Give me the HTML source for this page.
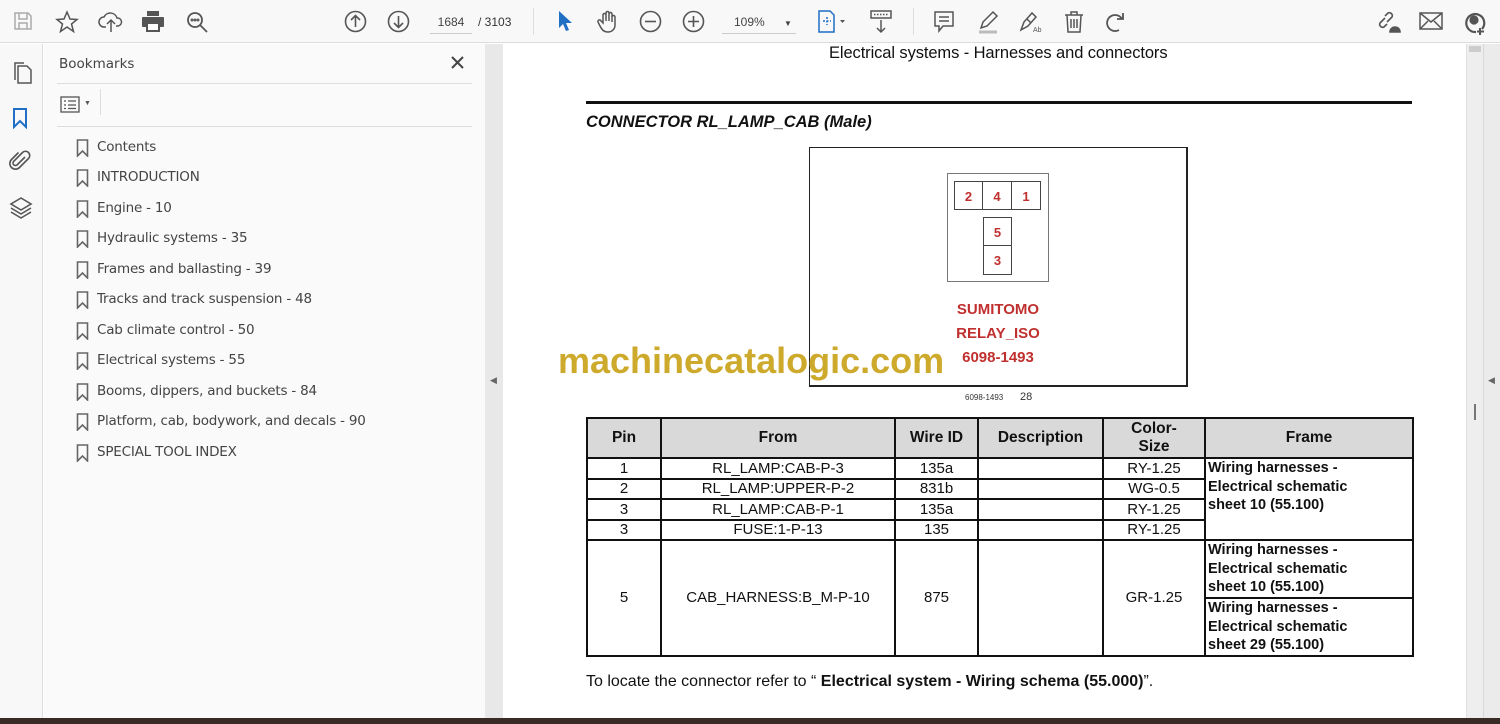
<!DOCTYPE html>
<html><head><style>
*{margin:0;padding:0;box-sizing:border-box}
body{width:1500px;height:724px;overflow:hidden;background:#fff;font-family:"Liberation Sans",sans-serif;position:relative}
.abs{position:absolute}
#tb{left:0;top:0;width:1500px;height:43px;background:#f8f8f8;border-bottom:1px solid #dcdcdc}
.ic{position:absolute;top:10px}
#side{left:0;top:44px;width:43px;height:674px;background:#f8f8f8;border-right:1px solid #ddd}
#panel{left:44px;top:44px;width:441px;height:674px;background:#fafafa}
#gl{left:485px;top:44px;width:18px;height:674px;background:#e8e8e8}
#page{left:503px;top:44px;width:963px;height:674px;background:#fff}
#sb{left:1466px;top:44px;width:17px;height:674px;background:#eeeeee;border-left:1px solid #e0e0e0}
#gr{left:1483px;top:44px;width:17px;height:674px;background:#ebebeb;border-left:1px solid #d8d8d8}
#bot{left:0;top:718px;width:1500px;height:6px;background:#3a2a26}
.bm{position:absolute;left:76px;color:#444;font-family:"DejaVu Sans",sans-serif;font-size:13.5px;letter-spacing:-0.2px}
.bm svg{position:absolute;left:0;top:1px}
.bm span{position:absolute;left:21px;top:1px;white-space:nowrap}
table{position:absolute;left:586px;top:417px;border-collapse:collapse;font-size:15px;color:#111;table-layout:fixed;width:826px}
td{border:2px solid #111;text-align:center;padding:0;line-height:17px}
th{border:2px solid #111;background:#d9d9d9;font-weight:bold;font-size:15.5px;line-height:18px}
.fr{text-align:left;font-weight:bold;padding-left:2px;line-height:18.5px;vertical-align:top;white-space:nowrap;font-size:14.5px}
.red{color:#c0302f;font-weight:bold;font-family:"Liberation Sans",sans-serif}
</style></head><body>
<div id="tb" class="abs">
<svg class="ic" style="left:12px" width="22" height="22" viewBox="0 0 22 22" fill="none" stroke="#aaa" stroke-width="1.5"><path d="M3 3h13l3 3v13H3z M7 3v6h8V3 M7 19v-6h8v6"/></svg>
<svg class="ic" style="left:55px" width="24" height="24" viewBox="0 0 24 24" fill="none" stroke="#555" stroke-width="1.5"><path d="M12 2l3 7 7 .5-5.5 4.5 2 7.5L12 17l-6.5 4.5 2-7.5L2 9.5 9 9z"/></svg>
<svg class="ic" style="left:98px" width="26" height="24" viewBox="0 0 26 24" fill="none" stroke="#555" stroke-width="1.5"><path d="M8 17H6a5 5 0 010-10 7 7 0 0113 1 4 4 0 011 8h-2 M13 22V10 M9 14l4-4 4 4"/></svg>
<svg class="ic" style="left:141px" width="24" height="22" viewBox="0 0 24 22" fill="#555"><rect x="6" y="1" width="12" height="5"/><rect x="1" y="7" width="22" height="10" rx="1"/><rect x="6" y="13" width="12" height="8" fill="#fff" stroke="#555" stroke-width="2"/></svg>
<svg class="ic" style="left:185px" width="24" height="24" viewBox="0 0 24 24" fill="none" stroke="#555" stroke-width="1.8"><circle cx="10" cy="10" r="7"/><path d="M15 15l7 7"/><circle cx="7" cy="10" r=".6"/><circle cx="10" cy="10" r=".6"/><circle cx="13" cy="10" r=".6"/></svg>
<svg class="ic" style="left:344px" width="23" height="23" viewBox="0 0 23 23" fill="none" stroke="#555" stroke-width="1.6"><circle cx="11.5" cy="11.5" r="10"/><path d="M11.5 17V6 M7 10l4.5-4.5L16 10"/></svg>
<svg class="ic" style="left:387px" width="23" height="23" viewBox="0 0 23 23" fill="none" stroke="#555" stroke-width="1.6"><circle cx="11.5" cy="11.5" r="10"/><path d="M11.5 6v11 M7 13l4.5 4.5L16 13"/></svg>
<div class="abs" style="left:430px;top:12px;width:42px;height:22px;border-bottom:1px solid #ccc;font-size:12px;color:#444;text-align:center;line-height:20px">1684</div>
<div class="abs" style="left:478px;top:12px;font-size:12px;color:#333;line-height:20px">/ 3103</div>
<div class="abs" style="left:533px;top:8px;width:1px;height:27px;background:#ddd"></div>
<svg class="ic" style="left:557px" width="16" height="22" viewBox="0 0 16 22"><path d="M2 1v17l4-4 3 7 3-1-3-7h6z" fill="#1f6fc5"/></svg>
<svg class="ic" style="left:596px" width="24" height="24" viewBox="0 0 24 24" fill="none" stroke="#555" stroke-width="1.5"><path d="M7 13V5a1.5 1.5 0 013 0v6V3a1.5 1.5 0 013 0v8V4a1.5 1.5 0 013 0v8V7a1.5 1.5 0 013 0v8c0 4-3 7-7 7s-6-2-8-6l-2-4a1.5 1.5 0 013-1z"/></svg>
<svg class="ic" style="left:639px" width="23" height="23" viewBox="0 0 23 23" fill="none" stroke="#555" stroke-width="1.6"><circle cx="11.5" cy="11.5" r="10"/><path d="M6 11.5h11"/></svg>
<svg class="ic" style="left:682px" width="23" height="23" viewBox="0 0 23 23" fill="none" stroke="#555" stroke-width="1.6"><circle cx="11.5" cy="11.5" r="10"/><path d="M6 11.5h11 M11.5 6v11"/></svg>
<div class="abs" style="left:722px;top:12px;width:74px;height:22px;border-bottom:1px solid #ccc;font-size:12px;color:#444;line-height:20px;padding-left:12px">109% <span style="font-size:8px;margin-left:16px">▼</span></div>
<svg class="ic" style="left:817px" width="30" height="24" viewBox="0 0 30 24" fill="none" stroke="#1f6fc5" stroke-width="1.5"><path d="M2 1h11l4 4v17H2z"/><path d="M6 11h8 M10 7v8" stroke-dasharray="2 1.5"/><path d="M23 10l2.5 3 2.5-3z" fill="#555" stroke="none"/></svg>
<svg class="ic" style="left:869px" width="24" height="24" viewBox="0 0 24 24" fill="none" stroke="#555" stroke-width="1.5"><rect x="2" y="1" width="20" height="7"/><path d="M5 4.5h14" stroke-dasharray="1.5 1.5"/><path d="M12 10v12 M8 18l4 4 4-4"/></svg>
<div class="abs" style="left:913px;top:8px;width:1px;height:27px;background:#ddd"></div>
<svg class="ic" style="left:933px" width="22" height="24" viewBox="0 0 22 24" fill="none" stroke="#555" stroke-width="1.5"><path d="M2 2h18v14H10l-4 5v-5H2z M6 7h10 M6 11h10"/></svg>
<svg class="ic" style="left:975px" width="26" height="24" viewBox="0 0 26 24" fill="none" stroke="#555" stroke-width="1.5"><path d="M6 18l2-6L18 2l4 4-10 10z"/><path d="M4 22h18" stroke="#bbb" stroke-width="3"/></svg>
<svg class="ic" style="left:1018px" width="26" height="24" viewBox="0 0 26 24" fill="none" stroke="#555" stroke-width="1.5"><path d="M3 20l3-8 8-9 4 4-8 9z M9 9l4 4"/><text x="15" y="22" font-size="7" fill="#555" stroke="none">Ab</text></svg>
<svg class="ic" style="left:1063px" width="22" height="24" viewBox="0 0 22 24" fill="none" stroke="#555" stroke-width="1.5"><path d="M2 5h18 M8 5V2h6v3 M4 5l1 17h12l1-17 M8 9v9 M11 9v9 M14 9v9"/></svg>
<svg class="ic" style="left:1104px" width="22" height="24" viewBox="0 0 22 24" fill="none" stroke="#555" stroke-width="1.8"><path d="M15 20a8 8 0 11 3-11 M19 3v6h-6"/></svg>
<svg class="ic" style="left:1375px" width="26" height="24" viewBox="0 0 26 24" fill="none" stroke="#555" stroke-width="1.6"><path d="M10 8l-5 5a3 3 0 004 4l3-3 M12 12l5-5a3 3 0 00-4-4l-3 3"/><path d="M15 22h10a4 4 0 00-10 0z" fill="#555"/></svg>
<svg class="ic" style="left:1419px" width="24" height="22" viewBox="0 0 24 22" fill="none" stroke="#555" stroke-width="1.5"><rect x="1" y="3" width="22" height="16"/><path d="M1 3l11 9 11-9 M1 19l8-8 M23 19l-8-8"/></svg>
<svg class="ic" style="left:1462px" width="26" height="26" viewBox="0 0 26 26" fill="none" stroke="#555" stroke-width="2.2"><path d="M14 22a9 9 0 116-3"/><circle cx="12" cy="10" r="3.5" fill="#555"/><path d="M18 18v7 M15 21.5h7" stroke-width="2"/></svg>
</div>
<div id="side" class="abs">
<svg class="abs" style="left:11px;top:17px" width="22" height="24" viewBox="0 0 22 24" fill="none" stroke="#555" stroke-width="1.5"><path d="M7 5h9l4 4v13H7z M4 19V2h9"/></svg>
<svg class="abs" style="left:12px;top:63px" width="16" height="22" viewBox="0 0 16 22" fill="none" stroke="#1f6fc5" stroke-width="2"><path d="M2 2h12v18l-6-6-6 6z"/></svg>
<svg class="abs" style="left:9px;top:105px" width="22" height="24" viewBox="0 0 22 24" fill="none" stroke="#555" stroke-width="1.6"><path d="M16 8l-8 8a2.5 2.5 0 01-3.5-3.5l9-9a4 4 0 016 6l-9 9a5.5 5.5 0 01-8-8l7-7"/></svg>
<svg class="abs" style="left:9px;top:152px" width="24" height="24" viewBox="0 0 24 24" fill="none" stroke="#555" stroke-width="1.6"><path d="M12 2l10 6-10 6L2 8z M2 12l10 6 10-6 M2 16l10 6 10-6"/></svg>
</div>
<div id="panel" class="abs">
<div class="abs" style="left:15px;top:12px;color:#444;font-family:'DejaVu Sans',sans-serif;font-size:13.5px">Bookmarks</div>
<svg class="abs" style="left:407px;top:12px" width="13" height="13" viewBox="0 0 13 13" stroke="#444" stroke-width="2"><path d="M1 1l11 11M12 1L1 12"/></svg>
<div class="abs" style="left:13px;top:39px;width:415px;height:1px;background:#ddd"></div>
<svg class="abs" style="left:16px;top:52px" width="20" height="17" viewBox="0 0 20 17" fill="none" stroke="#555" stroke-width="1.3"><rect x="1" y="1" width="18" height="15"/><path d="M4 5h2 M8 5h8 M4 9h2 M8 9h8 M4 12.5h2 M8 12.5h8"/></svg>
<div class="abs" style="left:40px;top:56px;font-size:7px;color:#555">▼</div>
<div class="abs" style="left:56px;top:45px;width:1px;height:26px;background:#ddd"></div>
<div class="abs" style="left:13px;top:82px;width:415px;height:1px;background:#ddd"></div>
</div>
<div class="bm" style="top:138px"><svg width="13" height="18" viewBox="0 0 13 18" fill="none" stroke="#666" stroke-width="1.6"><path d="M1.5 1h10v16l-5-5-5 5z"/></svg><span>Contents</span></div>
<div class="bm" style="top:168px"><svg width="13" height="18" viewBox="0 0 13 18" fill="none" stroke="#666" stroke-width="1.6"><path d="M1.5 1h10v16l-5-5-5 5z"/></svg><span>INTRODUCTION</span></div>
<div class="bm" style="top:199px"><svg width="13" height="18" viewBox="0 0 13 18" fill="none" stroke="#666" stroke-width="1.6"><path d="M1.5 1h10v16l-5-5-5 5z"/></svg><span>Engine - 10</span></div>
<div class="bm" style="top:229px"><svg width="13" height="18" viewBox="0 0 13 18" fill="none" stroke="#666" stroke-width="1.6"><path d="M1.5 1h10v16l-5-5-5 5z"/></svg><span>Hydraulic systems - 35</span></div>
<div class="bm" style="top:260px"><svg width="13" height="18" viewBox="0 0 13 18" fill="none" stroke="#666" stroke-width="1.6"><path d="M1.5 1h10v16l-5-5-5 5z"/></svg><span>Frames and ballasting - 39</span></div>
<div class="bm" style="top:290px"><svg width="13" height="18" viewBox="0 0 13 18" fill="none" stroke="#666" stroke-width="1.6"><path d="M1.5 1h10v16l-5-5-5 5z"/></svg><span>Tracks and track suspension - 48</span></div>
<div class="bm" style="top:321px"><svg width="13" height="18" viewBox="0 0 13 18" fill="none" stroke="#666" stroke-width="1.6"><path d="M1.5 1h10v16l-5-5-5 5z"/></svg><span>Cab climate control - 50</span></div>
<div class="bm" style="top:351px"><svg width="13" height="18" viewBox="0 0 13 18" fill="none" stroke="#666" stroke-width="1.6"><path d="M1.5 1h10v16l-5-5-5 5z"/></svg><span>Electrical systems - 55</span></div>
<div class="bm" style="top:382px"><svg width="13" height="18" viewBox="0 0 13 18" fill="none" stroke="#666" stroke-width="1.6"><path d="M1.5 1h10v16l-5-5-5 5z"/></svg><span>Booms, dippers, and buckets - 84</span></div>
<div class="bm" style="top:412px"><svg width="13" height="18" viewBox="0 0 13 18" fill="none" stroke="#666" stroke-width="1.6"><path d="M1.5 1h10v16l-5-5-5 5z"/></svg><span>Platform, cab, bodywork, and decals - 90</span></div>
<div class="bm" style="top:443px"><svg width="13" height="18" viewBox="0 0 13 18" fill="none" stroke="#666" stroke-width="1.6"><path d="M1.5 1h10v16l-5-5-5 5z"/></svg><span>SPECIAL TOOL INDEX</span></div>
<div id="gl" class="abs"><div class="abs" style="left:5px;top:331px;font-size:9px;color:#666">◀</div></div>
<div id="page" class="abs"></div>
<div id="sb" class="abs"><div class="abs" style="left:2px;top:2px;width:12px;height:6px;background:#ccc"></div><div class="abs" style="left:7px;top:360px;width:2px;height:16px;background:#777"></div></div>
<div id="gr" class="abs"><div class="abs" style="left:4px;top:331px;font-size:9px;color:#666">◀</div></div>
<div id="bot" class="abs"></div>

<div class="abs" style="left:829px;top:44px;font-size:16.5px;color:#111;letter-spacing:-0.1px">Electrical systems - Harnesses and connectors</div>
<div class="abs" style="left:586px;top:101px;width:826px;height:3px;background:#111"></div>
<div class="abs" style="left:586px;top:113px;font-size:16.5px;font-weight:bold;font-style:italic;color:#111">CONNECTOR RL_LAMP_CAB (Male)</div>
<div class="abs" style="left:809px;top:147px;width:379px;height:240px;border:1px solid #222;border-right-width:2px;border-bottom-width:2px"></div>
<div class="abs" style="left:947px;top:173px;width:102px;height:109px;border:1px solid #777"></div>
<div class="abs red" style="left:954px;top:181px;width:29px;height:29px;border:1px solid #444;text-align:center;line-height:29px;font-size:13px">2</div>
<div class="abs red" style="left:983px;top:181px;width:29px;height:29px;border:1px solid #444;border-left:0;text-align:center;line-height:29px;font-size:13px">4</div>
<div class="abs red" style="left:1012px;top:181px;width:29px;height:29px;border:1px solid #444;border-left:0;text-align:center;line-height:29px;font-size:13px">1</div>
<div class="abs red" style="left:983px;top:217px;width:29px;height:29px;border:1px solid #444;text-align:center;line-height:29px;font-size:13px">5</div>
<div class="abs red" style="left:983px;top:246px;width:29px;height:29px;border:1px solid #444;border-top:0;text-align:center;line-height:29px;font-size:13px">3</div>
<div class="abs red" style="left:898px;top:298px;width:200px;text-align:center;font-size:15px;line-height:24px">SUMITOMO<br>RELAY_ISO<br>6098-1493</div>
<div class="abs" style="left:558px;top:340px;font-size:36px;font-weight:bold;color:#c9a21b;opacity:.92">machinecatalogic.com</div>
<div class="abs" style="left:965px;top:393px;font-size:8px;color:#333">6098-1493</div>
<div class="abs" style="left:1020px;top:391px;font-size:11px;color:#333">28</div>

<table>
<colgroup><col style="width:74px"><col style="width:234px"><col style="width:83px"><col style="width:125px"><col style="width:102px"><col style="width:208px"></colgroup>
<tr style="height:40px"><th>Pin</th><th>From</th><th>Wire ID</th><th>Description</th><th>Color-<br>Size</th><th>Frame</th></tr>
<tr style="height:20.5px"><td>1</td><td>RL_LAMP:CAB-P-3</td><td>135a</td><td></td><td>RY-1.25</td><td class="fr" rowspan="4">Wiring harnesses -<br>Electrical schematic<br>sheet 10 (55.100)</td></tr>
<tr style="height:20.5px"><td>2</td><td>RL_LAMP:UPPER-P-2</td><td>831b</td><td></td><td>WG-0.5</td></tr>
<tr style="height:20.5px"><td>3</td><td>RL_LAMP:CAB-P-1</td><td>135a</td><td></td><td>RY-1.25</td></tr>
<tr style="height:20.5px"><td>3</td><td>FUSE:1-P-13</td><td>135</td><td></td><td>RY-1.25</td></tr>
<tr style="height:58px"><td rowspan="2">5</td><td rowspan="2">CAB_HARNESS:B_M-P-10</td><td rowspan="2">875</td><td rowspan="2"></td><td rowspan="2">GR-1.25</td><td class="fr">Wiring harnesses -<br>Electrical schematic<br>sheet 10 (55.100)</td></tr>
<tr style="height:57px"><td class="fr">Wiring harnesses -<br>Electrical schematic<br>sheet 29 (55.100)</td></tr>
</table>
<div class="abs" style="left:586px;top:673px;font-size:16px;color:#111">To locate the connector refer to “ <b>Electrical system - Wiring schema (55.000)</b>”.</div>
</body></html>
